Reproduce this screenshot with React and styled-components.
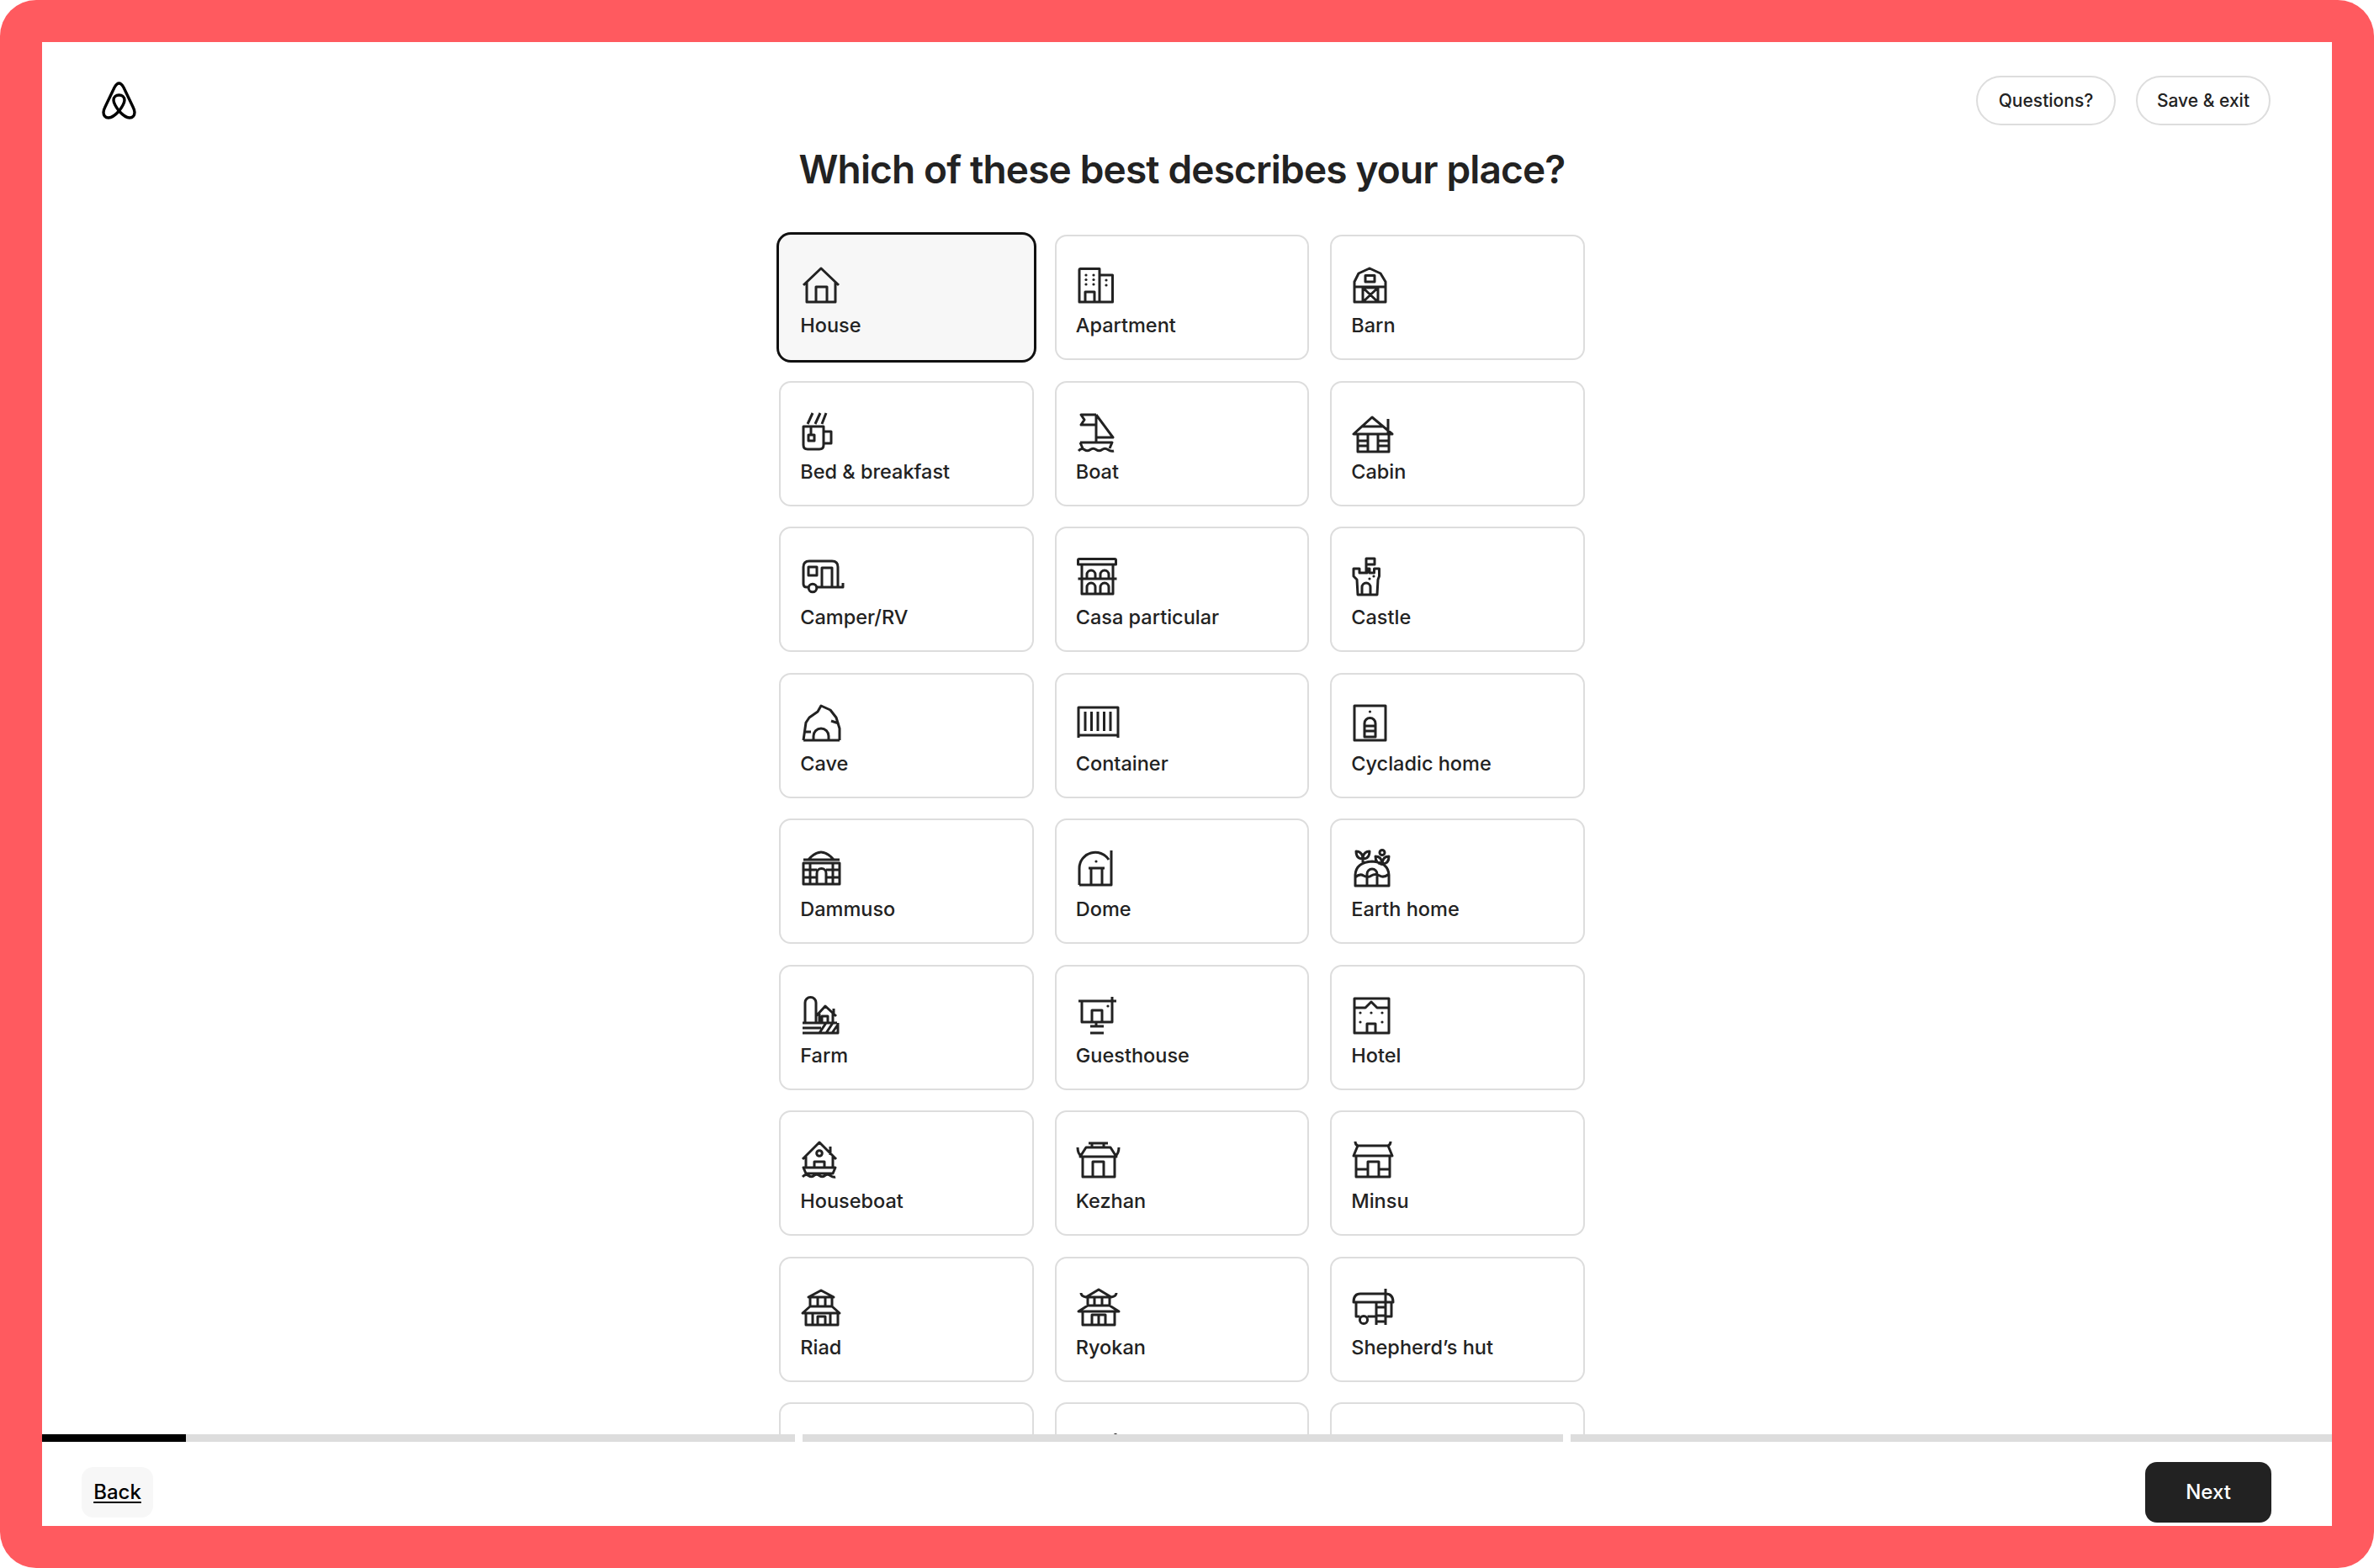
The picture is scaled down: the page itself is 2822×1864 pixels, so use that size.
import React from 'react'
import styled, { createGlobalStyle } from 'styled-components'

const GlobalStyle = createGlobalStyle`
  html, body { margin: 0; padding: 0; background: #fff; }
  body { font-family: Inter, "Liberation Sans", sans-serif; color: #222; }
  * { box-sizing: border-box; }
`

const Frame = styled.div`
  width: 2822px;
  height: 1864px;
  padding: 50px;
  background: #ff5a5f;
  border-radius: 43px;
`
const Panel = styled.div`
  height: 100%;
  display: flex;
  flex-direction: column;
  background: #fff;
  overflow: hidden;
`
const Header = styled.header`
  display: flex;
  justify-content: space-between;
  align-items: center;
  padding: 40px 73px 0 71px;
`
const Logo = styled.svg`
  width: 41px;
  height: 45px;
  display: block;
`
const HeaderActions = styled.div`
  display: flex;
  gap: 24px;
`
const PillButton = styled.button`
  width: ${p => p.$width}px;
  height: 59px;
  padding: 0;
  background: #fff;
  border: 2px solid #ddd;
  border-radius: 30px;
  font-family: inherit;
  font-size: 21px;
  font-weight: 500;
  color: #222;
`
const Main = styled.main`
  flex: 1;
  min-height: 0;
  overflow: hidden;
  padding-right: 12px;
`
const Title = styled.h1`
  margin: 24px 0 50px;
  height: 56px;
  line-height: 56px;
  text-align: center;
  font-size: 46px;
  font-weight: 600;
  letter-spacing: -0.85px;
  color: #222;
`
const Grid = styled.div`
  display: grid;
  grid-template-columns: repeat(3, 302.5px);
  grid-auto-rows: 149px;
  column-gap: 25px;
  row-gap: 24.5px;
  justify-content: center;
`
const Card = styled.button`
  display: flex;
  flex-direction: column;
  align-items: flex-start;
  padding: 35px 23px 0;
  background: ${p => (p.$selected ? '#f7f7f7' : '#fff')};
  border: 2px solid ${p => (p.$selected ? '#f7f7f7' : '#ddd')};
  border-radius: 14px;
  box-shadow: ${p => (p.$selected ? '0 0 0 3px #111' : 'none')};
  font-family: inherit;
  text-align: left;
`
const Glyph = styled.svg`
  width: 52px;
  height: 48px;
  margin-left: 1px;
  flex: none;
  display: block;
  fill: none;
  stroke: #222;
  stroke-width: 3;
  stroke-linejoin: round;
  overflow: visible;
`
const Label = styled.span`
  margin-top: 8px;
  font-size: 23.5px;
  line-height: 30px;
  font-weight: 500;
  color: #222;
  white-space: nowrap;
`
const Progress = styled.div`
  display: grid;
  grid-template-columns: 895px 904px 1fr;
  column-gap: 9px;
  height: 9px;
  flex: none;
`
const Segment = styled.div`
  background: linear-gradient(to right, #000 ${p => p.$fill}%, #ddd ${p => p.$fill}%);
`
const Footer = styled.footer`
  height: 100px;
  flex: none;
  display: flex;
  justify-content: space-between;
  align-items: center;
  padding: 20px 72px 0 47px;
`
const BackButton = styled.button`
  width: 85px;
  height: 60px;
  padding: 0 0 2px;
  background: #f7f7f7;
  border: 0;
  border-radius: 14px;
  font-family: inherit;
  font-size: 24px;
  font-weight: 500;
  color: #000;
  text-decoration: underline;
  text-underline-offset: 3px;
  text-decoration-thickness: 2px;
`
const NextButton = styled.button`
  width: 150px;
  height: 72px;
  padding: 0 0 2px;
  background: #222;
  border: 0;
  border-radius: 14px;
  font-family: inherit;
  font-size: 24px;
  font-weight: 500;
  color: #fff;
`

const Dots = ({ points, r = 1.6 }) => points.map(([x, y]) => (
  <circle key={`${x}-${y}`} cx={x} cy={y} r={r} fill="#222" stroke="none" />
))

const icons = {
  house: <path d="M3 23 24 3l21 20M7 19v24h34V19M18 43V25h13v18" />,
  apartment: <>
    <path d="M3 43V5q0-1.500 1.500-1.500H27V43H3ZM27 11h15.500V43H27M10 43V31h11v12" />
    <Dots points={[[11, 11], [20, 11], [11, 16.500], [20, 16.500], [11, 22], [20, 22], [35, 17], [35, 23]]} />
  </>,
  barn: <path d="M3 43V19l5-10L21 3l13 6 6 10v24ZM3 25h37M16 11.500h11V19H16ZM13 43V26h18v17M13 26l18 17M31 26 13 43" />,
  breakfast: <path d="m8 14 6-13M17 14l6-13M25 14l5-13M3 17h24v22q0 5-5 5H8q-5 0-5-5ZM27 23h9v14h-9M12 17v10M9 27h7v7H9Z" />,
  boat: <path d="M23 3H5l4 6-4 6h18M23 3l20 27H23M23 3v33M4 36h38l-3 7M4 36l3 7M2 46q3.500-4 7-1.500t7 0 7 0 7 0 7 0 7 1.500" />,
  cabin: <path d="M24 6 2 26h46L24 6ZM43 8v18M11 17h26M7 26v21h37V26M19 26v21M31 26v21M7 34h12M31 34h13M7 40h12M31 40h13" />,
  camper: <>
    <path d="M9.500 35H7q-4 0-4-4V11q0-7 7-7h27q7 0 7 7v24H19M44 35h6v-5M25 35V12h12v23M9 11h10v10H9Z" />
    <circle cx="14" cy="36" r="4.800" />
  </>,
  casa: <path d="M4 1.500h41q1.500 0 1.500 1.500v5h-45V3q0-1.500 1.500-1.500ZM6 8v35h37V8M1.500 25h46M12 25v-5a5 5 0 0 1 10 0v5M28 25v-5a5 5 0 0 1 10 0v5M12 43v-8a5 5 0 0 1 10 0v8M28 43v-8a5 5 0 0 1 10 0v8" />,
  castle: <>
    <path d="M17 18V1h10v7H17M2 13v9l4 4 1 18h23l1-18 1.500-4v-9h-6v5H21v-5h-3v5H9v-5ZM12 44v-9a5 5 0 0 1 10 0v9" />
    <Dots points={[[21, 25], [26, 22]]} />
  </>,
  cave: <path d="M3 43h43M3 43 6 22l4-6 10-7 4-7 11 5 7 9 4 13v14M15 43v-5a9 9 0 0 1 18 0v5M4 33h8M36 20l9 3" />,
  container: <path d="M2 4h47v33H2ZM2 4v36M49 4v36M10 9v23M17.500 9v23M25 9v23M32.500 9v23M40 9v23" />,
  cycladic: <>
    <path d="M3 2h37v41H3ZM15 39V23a6.500 6.500 0 0 1 13 0v16ZM15 26h13M15 32h13" />
    <Dots points={[[21.500, 9]]} />
  </>,
  dammuso: <path d="M9 12q15-18 30 0M3 12h43M3 16h43v25H3ZM3 24h16M30 24h16M3 33h16M30 33h16M11 16v25M38 16v25M19 41V28a5.500 5.500 0 0 1 11 0v13" />,
  dome: <>
    <path d="M3 42V22a19 19 0 0 1 35-10M41 1v41H3M14 22h19M17 22v20M30 22v20" />
    <Dots points={[[23, 14]]} />
  </>,
  earth: <>
    <path d="M4 43V30q1-15 20-16 19 1 20 16v13ZM4 33q5-5 10-2t9 0q5-3 10 0t11-2M18 42V29a6 6 0 0 1 12 0v13M13 15V11M5 2q7 0 8 8 1-8 8-8 0 9-8 9-8 0-8-9ZM35 19v-3M28 8q7 0 8 8 1-8 8-8 0 9-8 9-8 0-8-9Z" />
    <circle cx="36" cy="3.500" r="3" />
  </>,
  farm: <path d="M5 32V8a6.500 6.500 0 0 1 13 0v24M2 32h41M2 38h22M2 44h42V32M18 24l11-12 13 12M39 15v6M22 21v11M38 21v11M25 32v-8h7v8M22 44l8-12M30 44l8-12M37 44l7-10" />,
  guesthouse: <>
    <path d="M2 6h45M42 1v10M6 6v25h36V6M18 31V17h12v14M23 31v5M16 36h16M16 44h16" />
    <Dots points={[[37, 12]]} />
  </>,
  hotel: <>
    <path d="M3 3h41v41H3ZM3 14h13l7-7 7 7h14M18 44V33h10v11" />
    <Dots points={[[10, 20], [23, 20], [36, 20], [10, 31], [36, 31]]} />
  </>,
  houseboat: <>
    <path d="m2 21 20-20 20 20M35 6v10M6 17v14M38 17v14M16 31v-7h12v7M3 31h38l-3 7H6ZM2 42q3.500-4 7-1.500t6.500 0 6.500 0 6.500 0 6.500 0 6 1.500" />
    <circle cx="22" cy="14" r="3.300" />
  </>,
  kezhan: <path d="M14 2h23M18 2v5M32 2v5M11 7h29l7 11H4ZM1 7q0 8 5 11M50 7q0 8-5 11M7 18v24h38V18M19 42V24h13v18" />,
  minsu: <path d="M4 0q0 4 3 5h36q3-1 3-5M7 5 2 17h46L43 5M5 17v25h40V17M5 33h14M32 33h13M19 42V24h13v18" />,
  riad: <path d="M24 3 9 11h30ZM11 11v11h26V11M20 11v11M29 11v11M11 22 2 30h44l-9-8M6 30v14h38V30M14 30v14M35 30v14M20 44V34h9v10" />,
  ryokan: <path d="M26 2 11 11h30ZM11 11q-6-1-6-5M41 11q6-1 6-5M13 11v10h26V11M21 11v10M30 11v10M13 21 2 28h48l-11-7M7 28v16h38V28M18 44V32h16v12M26 32v12" />,
  hut: <>
    <path d="M2 17q0-10 8-10h30q9 0 9 10ZM40 1v16M5 17v17h4.500M18.500 34H29M47 17v17h-7M29 17v27M40 17v27M29 23h11M29 33h11M29 40h11" />
    <circle cx="14" cy="38" r="4.600" />
  </>,
  towerTip: <path d="M46 0v8" />,
}

// the last row is only peeking out from under the progress bar
const places = [
  ['House', 'house'], ['Apartment', 'apartment'], ['Barn', 'barn'],
  ['Bed & breakfast', 'breakfast'], ['Boat', 'boat'], ['Cabin', 'cabin'],
  ['Camper/RV', 'camper'], ['Casa particular', 'casa'], ['Castle', 'castle'],
  ['Cave', 'cave'], ['Container', 'container'], ['Cycladic home', 'cycladic'],
  ['Dammuso', 'dammuso'], ['Dome', 'dome'], ['Earth home', 'earth'],
  ['Farm', 'farm'], ['Guesthouse', 'guesthouse'], ['Hotel', 'hotel'],
  ['Houseboat', 'houseboat'], ['Kezhan', 'kezhan'], ['Minsu', 'minsu'],
  ['Riad', 'riad'], ['Ryokan', 'ryokan'], ['Shepherd’s hut', 'hut'],
  ['', null], ['', 'towerTip'], ['', null],
]

const App = () => (
  <Frame>
    <GlobalStyle />
    <Panel>
      <Header>
        <Logo viewBox="0 0 41 45" fill="none" stroke="#000" strokeWidth="3.4">
          <path d="M20.500 35C15 41 11 43 8 43 4 43 2 40 2 36.500 2 34.500 3 32 4 30L15 7C17 3.500 18.500 2 20.500 2S24 3.500 26 7L37 30C38 32 39 34.500 39 36.500 39 40 37 43 33 43 30 43 26 41 20.500 35 16 29 14 25 14 22 14 18 17 16 20.500 16S27 18 27 22C27 25 25 29 20.500 35Z" />
        </Logo>
        <HeaderActions>
          <PillButton $width={166}>Questions?</PillButton>
          <PillButton $width={160}>Save &amp; exit</PillButton>
        </HeaderActions>
      </Header>
      <Main>
        <Title>Which of these best describes your place?</Title>
        <Grid>
          {places.map(([name, icon], i) => (
            <Card key={i} $selected={i === 0}>
              <Glyph viewBox="0 0 52 48">{icons[icon]}</Glyph>
              {name && <Label>{name}</Label>}
            </Card>
          ))}
        </Grid>
      </Main>
      <Progress>
        <Segment $fill={19.1} />
        <Segment $fill={0} />
        <Segment $fill={0} />
      </Progress>
      <Footer>
        <BackButton>Back</BackButton>
        <NextButton>Next</NextButton>
      </Footer>
    </Panel>
  </Frame>
)

export default App
